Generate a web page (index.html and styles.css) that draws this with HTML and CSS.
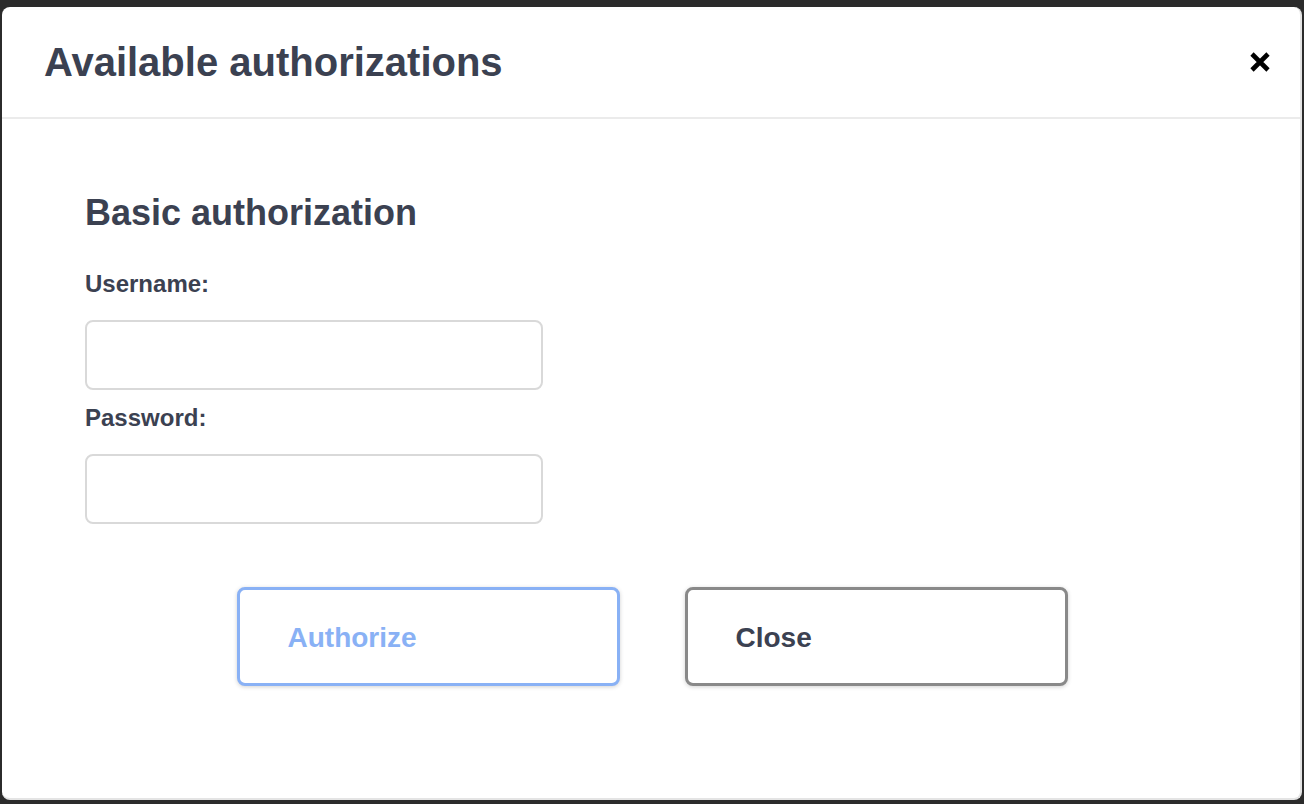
FILE: index.html
```html
<!DOCTYPE html>
<html lang="en">
<head>
<meta charset="utf-8">
<title>Available authorizations</title>
<link rel="stylesheet" href="styles.css">
</head>
<body>
<div class="backdrop">
  <div class="modal">
    <div class="modal-header">
      <h3 class="modal-title">Available authorizations</h3>
      <button class="close-x" type="button" aria-label="Close">
        <svg width="22" height="22" viewBox="0 0 22 22">
          <path d="M3 3 L19 19 M19 3 L3 19" stroke="#000" stroke-width="4.6" stroke-linecap="butt" fill="none"/>
        </svg>
      </button>
    </div>
    <div class="modal-body">
      <div class="auth-container">
        <h4 class="auth-title">Basic authorization</h4>
        <label class="field-label" for="username">Username:</label>
        <input class="field-input" id="username" type="text">
        <label class="field-label" for="password">Password:</label>
        <input class="field-input" id="password" type="password">
      </div>
      <div class="btn-row">
        <button class="btn btn-authorize" type="button">Authorize</button>
        <button class="btn btn-close" type="button">Close</button>
      </div>
    </div>
  </div>
</div>
</body>
</html>
```

FILE: styles.css
```css
* { box-sizing: border-box; }

html, body {
  margin: 0;
  padding: 0;
  height: 804px;
  overflow: hidden;
  background: #2b2b2b;
  font-family: "Liberation Sans", Arial, Helvetica, sans-serif;
  color: #3b4151;
}

.backdrop {
  padding: 7px 2px 0 2px;
  height: 804px;
}

.modal {
  width: 1300px;
  height: 793px;
  background: #fff;
  border-radius: 8px;
  border-right: 2px solid #e4e4e4;
  border-bottom: 2px solid #e4e4e4;
  display: flex;
  flex-direction: column;
}

.modal-header {
  height: 112px;
  flex: none;
  display: flex;
  align-items: center;
  justify-content: space-between;
  padding: 0 29px 0 42px;
  border-bottom: 2px solid #ebebeb;
}

.modal-title {
  margin: 0;
  font-size: 40px;
  font-weight: 700;
  color: #3b4151;
  line-height: 1.15;
}

.close-x {
  border: 0;
  background: none;
  padding: 0;
  width: 22px;
  height: 22px;
  display: flex;
  cursor: pointer;
}

.modal-body {
  padding: 0 40px;
}

.auth-container {
  padding: 73px 0 0 43px;
  display: flex;
  flex-direction: column;
  align-items: flex-start;
}

.auth-title {
  margin: 0 0 37px;
  font-size: 36px;
  font-weight: 700;
  line-height: 41px;
}

.field-label {
  font-size: 24px;
  font-weight: 700;
  line-height: 28px;
  margin-bottom: 22px;
}

.field-input {
  width: 458px;
  height: 70px;
  border: 2px solid #d9d9d9;
  border-radius: 8px;
  background: #fff;
  margin: 0 0 14px;
  font-size: 24px;
  padding: 0 14px;
}

.btn-row {
  display: flex;
  justify-content: center;
  gap: 65px;
  margin-top: 49px;
  padding-left: 2px;
}

.btn {
  width: 383px;
  height: 99px;
  border-radius: 8px;
  border: 3px solid;
  background: #fff;
  font-family: "Liberation Sans", Arial, Helvetica, sans-serif;
  font-size: 28px;
  font-weight: 700;
  text-align: left;
  padding: 3px 0 0 48px;
  box-shadow: 0 1px 4px rgba(0, 0, 0, 0.18);
  cursor: pointer;
}

.btn-authorize {
  border-color: #89b1f5;
  color: #89b1f5;
}

.btn-close {
  border-color: #898989;
  color: #3b4151;
}
```
